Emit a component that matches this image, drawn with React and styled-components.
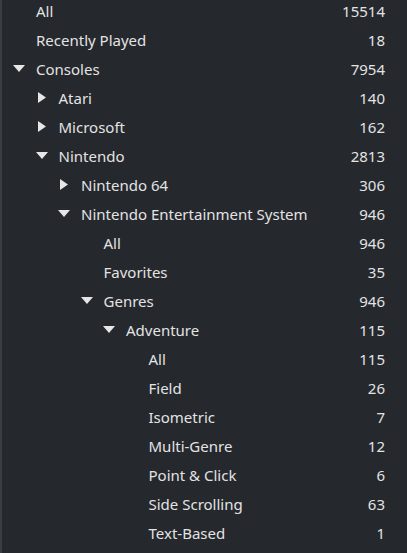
import React from "react";
import styled, { createGlobalStyle } from "styled-components";

const GlobalStyle = createGlobalStyle`
  html, body {
    margin: 0;
    padding: 0;
    background: #25282d;
  }
  body {
    font-family: "Noto Sans", "Open Sans", sans-serif;
  }
`;

const INDENT = 22.5;

const TREE = [
  { label: "All", count: 15514 },
  { label: "Recently Played", count: 18 },
  {
    label: "Consoles",
    count: 7954,
    open: true,
    children: [
      { label: "Atari", count: 140, children: [] },
      { label: "Microsoft", count: 162, children: [] },
      {
        label: "Nintendo",
        count: 2813,
        open: true,
        children: [
          { label: "Nintendo 64", count: 306, children: [] },
          {
            label: "Nintendo Entertainment System",
            count: 946,
            open: true,
            children: [
              { label: "All", count: 946 },
              { label: "Favorites", count: 35 },
              {
                label: "Genres",
                count: 946,
                open: true,
                children: [
                  {
                    label: "Adventure",
                    count: 115,
                    open: true,
                    children: [
                      { label: "All", count: 115 },
                      { label: "Field", count: 26 },
                      { label: "Isometric", count: 7 },
                      { label: "Multi-Genre", count: 12 },
                      { label: "Point & Click", count: 6 },
                      { label: "Side Scrolling", count: 63 },
                      { label: "Text-Based", count: 1 },
                    ],
                  },
                ],
              },
            ],
          },
        ],
      },
    ],
  },
];

const Panel = styled.div`
  height: 553px;
  overflow: hidden;
  background: #25282d;
  border-left: 2px solid #3a3d42;
  box-sizing: border-box;
`;

// list is scrolled a few pixels, so the first row is cut at the top
const List = styled.ul`
  list-style: none;
  margin: -4px 0 0 0;
  padding: 0;
`;

const Row = styled.li`
  display: flex;
  align-items: center;
  height: 29px;
  padding-left: ${(p) => 11 + p.$level * INDENT}px;
  padding-right: 22px;
  color: #e3e3e3;
  font-size: 15px;
`;

const CaretSlot = styled.span`
  flex: 0 0 23px;
  display: flex;
  align-items: center;
  height: 100%;
`;

const Label = styled.span`
  flex: 1;
  white-space: nowrap;
`;

const Count = styled.span`
  text-align: right;
`;

function Caret({ open }) {
  if (open) {
    return (
      <svg width="12" height="7" viewBox="0 0 12 7">
        <polygon points="0,0 12,0 6,7" fill="#e6e6e6" />
      </svg>
    );
  }
  return (
    <svg width="8" height="11" viewBox="0 0 8 11" style={{ marginLeft: 2 }}>
      <polygon points="0,0 8,5.5 0,11" fill="#e6e6e6" />
    </svg>
  );
}

function flatten(nodes, level, out) {
  nodes.forEach((n) => {
    out.push({ ...n, level });
    if (n.open && n.children) flatten(n.children, level + 1, out);
  });
  return out;
}

export default function App() {
  const rows = flatten(TREE, 0, []);
  return (
    <>
      <GlobalStyle />
      <Panel>
        <List>
          {rows.map((r, i) => (
            <Row key={i} $level={r.level}>
              <CaretSlot>{r.children && <Caret open={r.open} />}</CaretSlot>
              <Label>{r.label}</Label>
              <Count>{r.count}</Count>
            </Row>
          ))}
        </List>
      </Panel>
    </>
  );
}
